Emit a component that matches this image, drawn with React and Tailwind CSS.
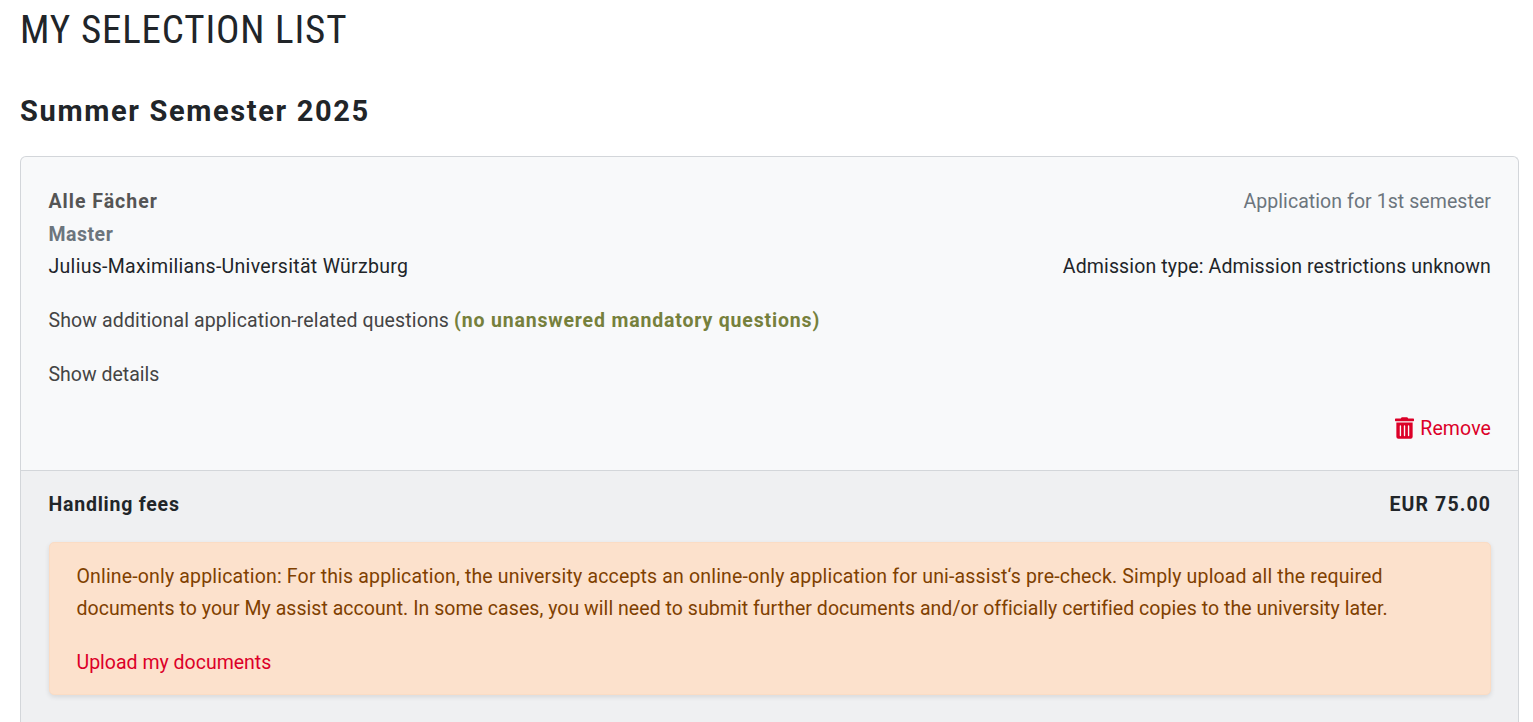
import React from "react";
import { FaTrashAlt } from "react-icons/fa";

const App = () => {
  return (
    <div className="h-[722px] overflow-hidden bg-white px-[20px] font-['Roboto',sans-serif] text-[19.5px] leading-[32.5px] text-[#212529]">
      <h1 className="pt-[6px] text-[39px] leading-[48px] font-normal tracking-[0.85px] [font-stretch:condensed]">
        MY SELECTION LIST
      </h1>
      <h2 className="mt-[37px] text-[29px] leading-[40px] font-bold tracking-[1.65px]">
        Summer Semester 2025
      </h2>

      <div className="mt-[25px] mr-[-6px] rounded-t-[6px] border border-b-0 border-[#d3d6da] bg-[#f8f9fa]">
        <div className="h-[313px] pr-[27px] pl-[27.5px] pt-[28px]">
          <div className="flex justify-between pt-[1px]">
            <strong className="font-bold tracking-[1px] text-[#555555]">Alle Fächer</strong>
            <span className="tracking-[0.07px] text-[#6c757d]">Application for 1st semester</span>
          </div>
          <div className="font-bold tracking-[0.5px] text-[#6c757d]">Master</div>
          <div className="flex justify-between">
            <span className="tracking-[0.3px]">Julius-Maximilians-Universität Würzburg</span>
            <span className="tracking-[0.13px]">Admission type: Admission restrictions unknown</span>
          </div>
          <div className="mt-[21px] tracking-[0.13px] text-[#444444]">
            Show additional application-related questions{" "}
            <strong className="font-bold tracking-[0.83px] text-[#76803c]">(no unanswered mandatory questions)</strong>
          </div>
          <div className="mt-[22px] text-[#444444]">Show details</div>
          <div className="mt-[21px] flex items-center justify-end gap-[6px] text-[#dc0028]">
            <FaTrashAlt className="mb-[2px] h-[22px] w-[19px]" />
            <span className="tracking-[0.1px]">Remove</span>
          </div>
        </div>

        <div className="border-t border-[#d3d6da] bg-[#eff0f2] pr-[27px] pl-[27.5px] pt-[18px] pb-[40px]">
          <div className="flex justify-between font-bold">
            <span className="tracking-[0.77px]">Handling fees</span>
            <span className="tracking-[1.1px]">EUR 75.00</span>
          </div>
          <div className="mt-[20px] rounded-[5px] border border-[#fbdcc4] bg-[#fce1cc] pr-[26px] pl-[27px] pt-[18px] pb-[15px] text-[#7f4000] shadow-[0_2px_5px_rgba(0,0,0,0.1)]">
            <p className="whitespace-nowrap">
              <span className="block tracking-[0.165px]">
                Online-only application: For this application, the university accepts an online-only application for uni-assist‘s pre-check. Simply upload all the required
              </span>
              <span className="block tracking-[0.045px]">
                documents to your My assist account. In some cases, you will need to submit further documents and/or officially certified copies to the university later.
              </span>
            </p>
            <p className="mt-[21px] text-[#dc0028]">Upload my documents</p>
          </div>
        </div>
      </div>
    </div>
  );
};

export default App;
